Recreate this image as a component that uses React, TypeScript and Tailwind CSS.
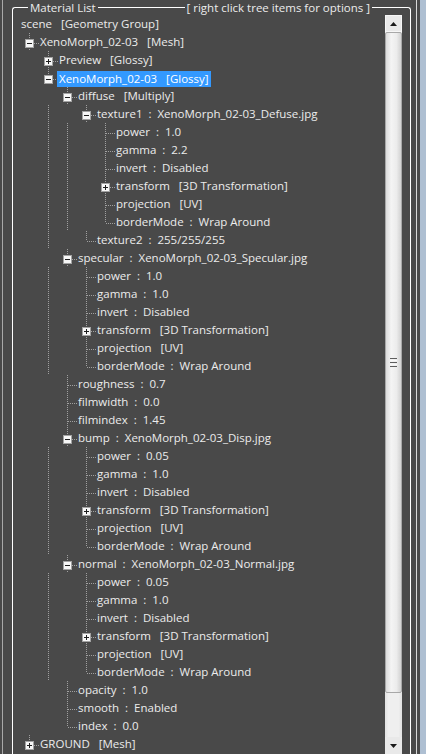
import React from "react";

type TreeNode = {
  label: string;
  children?: TreeNode[];
  collapsed?: boolean;
  selected?: boolean;
};

type Row = {
  node: TreeNode;
  level: number;
  ancestorsNext: boolean[];
  hasNext: boolean;
};

const textureProps = (power: string, gamma: string): TreeNode[] => [
  { label: `power  :  ${power}` },
  { label: `gamma  :  ${gamma}` },
  { label: "invert  :  Disabled" },
  { label: "transform   [3D Transformation]", collapsed: true },
  { label: "projection   [UV]" },
  { label: "borderMode  :  Wrap Around" },
];

const tree: TreeNode = {
  label: "scene   [Geometry Group]",
  children: [
    {
      label: "XenoMorph_02-03   [Mesh]",
      children: [
        { label: "Preview   [Glossy]", collapsed: true },
        {
          label: "XenoMorph_02-03   [Glossy]",
          selected: true,
          children: [
            {
              label: "diffuse   [Multiply]",
              children: [
                {
                  label: "texture1  :  XenoMorph_02-03_Defuse.jpg",
                  children: textureProps("1.0", "2.2"),
                },
                { label: "texture2  :  255/255/255" },
              ],
            },
            {
              label: "specular  :  XenoMorph_02-03_Specular.jpg",
              children: textureProps("1.0", "1.0"),
            },
            { label: "roughness  :  0.7" },
            { label: "filmwidth  :  0.0" },
            { label: "filmindex  :  1.45" },
            {
              label: "bump  :  XenoMorph_02-03_Disp.jpg",
              children: textureProps("0.05", "1.0"),
            },
            {
              label: "normal  :  XenoMorph_02-03_Normal.jpg",
              children: textureProps("0.05", "1.0"),
            },
            { label: "opacity  :  1.0" },
            { label: "smooth  :  Enabled" },
            { label: "index  :  0.0" },
          ],
        },
      ],
    },
    { label: "GROUND   [Mesh]", collapsed: true },
  ],
};

function flatten(
  node: TreeNode,
  level: number,
  ancestorsNext: boolean[],
  hasNext: boolean,
  out: Row[]
) {
  out.push({ node, level, ancestorsNext, hasNext });
  if (node.children && !node.collapsed) {
    node.children.forEach((child, i) =>
      flatten(
        child,
        level + 1,
        [...ancestorsNext, hasNext],
        i < node.children!.length - 1,
        out
      )
    );
  }
}

const rows: Row[] = [];
flatten(tree, 0, [], false, rows);

const DOT = "#a0a0a0";

// one 19px gutter cell of the tree: dotted connectors and the +/- box
const Gutter: React.FC<{
  top?: boolean;
  bottom?: boolean;
  branch?: boolean;
  box?: "plus" | "minus";
}> = ({ top, bottom, branch, box }) => (
  <svg width={19} height={18} className="block shrink-0" shapeRendering="crispEdges">
    {top && <line x1={8.5} y1={0} x2={8.5} y2={10} stroke={DOT} strokeDasharray="1 1" />}
    {bottom && <line x1={8.5} y1={10} x2={8.5} y2={18} stroke={DOT} strokeDasharray="1 1" />}
    {branch && <line x1={9} y1={10.5} x2={19} y2={10.5} stroke={DOT} strokeDasharray="1 1" />}
    {box && (
      <g>
        <rect x={4.5} y={6.5} width={8} height={8} fill="#f7f7f7" stroke="#a3a3a3" />
        <line x1={6} y1={10.5} x2={11} y2={10.5} stroke="#1e1e1e" />
        {box === "plus" && <line x1={8.5} y1={8} x2={8.5} y2={13} stroke="#1e1e1e" />}
      </g>
    )}
  </svg>
);

const TreeRow: React.FC<{ row: Row }> = ({ row }) => {
  const { node, level, ancestorsNext, hasNext } = row;
  const cells: React.ReactNode[] = [];
  for (let k = 1; k < level; k++) {
    const on = ancestorsNext[k + 1];
    cells.push(<Gutter key={k} top={on} bottom={on} />);
  }
  if (level > 0) {
    const expandable = !!node.children || !!node.collapsed;
    cells.push(
      <Gutter
        key="own"
        top
        bottom={hasNext}
        branch
        box={expandable ? (node.collapsed ? "plus" : "minus") : undefined}
      />
    );
  }
  return (
    <div className="flex h-[18px] items-center pl-[8px]">
      {cells}
      {node.selected ? (
        <span className="-ml-[2px] mt-[1px] whitespace-pre bg-[#3399ff] px-[2px] leading-[16px] text-white">
          {node.label}
        </span>
      ) : (
        <span className="whitespace-pre leading-[18px]">{node.label}</span>
      )}
    </div>
  );
};

const Scrollbar: React.FC = () => (
  <div className="flex w-[17px] shrink-0 flex-col bg-[#ebebeb]">
    <div className="flex h-[17px] shrink-0 items-center justify-center border border-[#f6f6f6] bg-[#e9e9e9]">
      <svg width="7" height="4" viewBox="0 0 7 4">
        <path d="M3.5 0 L7 4 L0 4 Z" fill="#1a1a1a" />
      </svg>
    </div>
    <div className="flex h-[661px] shrink-0 items-center justify-center rounded-[2px] border border-[#a8a8a8] bg-[linear-gradient(to_right,#dcdcdc,#f4f4f4_35%,#ececec_70%,#d2d2d2)]">
      <div className="flex flex-col gap-[1px]">
        <div className="h-[1px] w-[7px] bg-[#5e5e5e]" />
        <div className="h-[1px] w-[7px] bg-[#f8f8f8]" />
        <div className="h-[1px] w-[7px] bg-[#5e5e5e]" />
        <div className="h-[1px] w-[7px] bg-[#f8f8f8]" />
        <div className="h-[1px] w-[7px] bg-[#5e5e5e]" />
      </div>
    </div>
    <div className="flex-1 bg-[linear-gradient(to_right,#e2e2e2,#efefef_20%,#efefef_80%,#e2e2e2)]" />
    <div className="flex h-[17px] shrink-0 items-center justify-center bg-[#e9e9e9]">
      <svg width="7" height="4" viewBox="0 0 7 4">
        <path d="M0 0 L7 0 L3.5 4 Z" fill="#1a1a1a" />
      </svg>
    </div>
  </div>
);

export default function App() {
  return (
    <div
      className="flex h-[754px] w-[426px] overflow-hidden bg-[#494949] text-[11.5px] text-[#ececec]"
      style={{ fontFamily: '"Open Sans", "Noto Sans", sans-serif' }}
    >
      <div className="ml-[2px] w-[1px] shrink-0 bg-[#a9a9a9]" />
      <div className="ml-[9px] flex w-[399px] shrink-0 flex-col">
        <div className="flex h-[15px] shrink-0">
          <div className="mt-[7px] h-[8px] w-[16px] rounded-tl-[3px] border-l border-t border-white" />
          <span className="whitespace-pre px-[2px] leading-[15px]">Material List</span>
          <div className="mt-[7px] flex-1 border-t border-white" />
          <span className="whitespace-pre px-[2px] leading-[15px]">
            [ right click tree items for options ]
          </span>
          <div className="mt-[7px] h-[8px] w-[39px] rounded-tr-[3px] border-r border-t border-white" />
        </div>
        <div className="flex flex-1 border-l border-r border-white">
          <div className="flex w-[372px] shrink-0 flex-col">
            {rows.map((r, i) => (
              <TreeRow key={i} row={r} />
            ))}
          </div>
          <Scrollbar />
        </div>
      </div>
      <div className="ml-[5px] w-[1px] shrink-0 bg-[#d8d8d8]" />
      <div className="ml-[3px] flex-1 bg-[#aebfd2]" />
    </div>
  );
}
